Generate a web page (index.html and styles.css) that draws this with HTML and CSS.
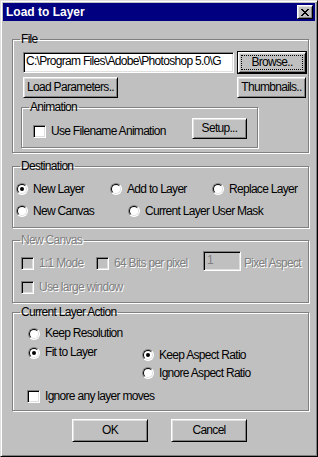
FILE: index.html
```html
<!DOCTYPE html>
<html>
<head>
<meta charset="utf-8">
<title>Load to Layer</title>
<link rel="stylesheet" href="styles.css">
</head>
<body>
<div class="window">
  <div class="titlebar">
    <span class="title">Load to Layer</span>
    <button class="close" aria-label="Close"><svg width="8" height="7" viewBox="0 0 8 7" shape-rendering="crispEdges"><path d="M0 0h2v1H0zM6 0h2v1H6zM1 1h2v1H1zM5 1h2v1H5zM2 2h4v1H2zM3 3h2v1H3zM2 4h4v1H2zM1 5h2v1H1zM5 5h2v1H5zM0 6h2v1H0zM6 6h2v1H6z"/></svg></button>
  </div>
  <div class="body">
    <fieldset class="grp grp-file">
      <legend>File</legend>
      <div class="file-inner">
        <div class="row r1">
          <div class="field path">C:\Program Files\Adobe\Photoshop 5.0\G</div>
          <button class="btn default browse">Browse..</button>
        </div>
        <div class="row r2">
          <button class="btn load">Load Parameters..</button>
          <button class="btn thumbs">Thumbnails..</button>
        </div>
        <fieldset class="grp grp-anim">
          <legend>Animation</legend>
          <div class="anim-inner">
            <label class="opt anim-chk"><span class="chk"></span>Use Filename Animation</label>
            <button class="btn setup">Setup...</button>
          </div>
        </fieldset>
      </div>
    </fieldset>

    <fieldset class="grp grp-dest">
      <legend>Destination</legend>
      <div class="dest-inner">
        <div class="row dest-row">
          <label class="opt w94"><span class="radio on"></span>New Layer</label>
          <label class="opt w102"><span class="radio"></span>Add to Layer</label>
          <label class="opt"><span class="radio"></span>Replace Layer</label>
        </div>
        <div class="row dest-row">
          <label class="opt w112"><span class="radio"></span>New Canvas</label>
          <label class="opt"><span class="radio"></span>Current Layer User Mask</label>
        </div>
      </div>
    </fieldset>

    <fieldset class="grp grp-canvas disabled">
      <legend>New Canvas</legend>
      <div class="canvas-inner">
        <div class="row canvas-row">
          <label class="opt w75"><span class="chk"></span>1:1 Mode</label>
          <label class="opt w107"><span class="chk"></span>64 Bits per pixel</label>
          <div class="field aspect">1</div>
          <span class="opt aspect-label">Pixel Aspect</span>
        </div>
        <label class="opt large"><span class="chk"></span>Use large window</label>
      </div>
    </fieldset>

    <fieldset class="grp grp-cla">
      <legend>Current Layer Action</legend>
      <div class="cla-inner">
        <div class="cla-radios">
          <div class="col-left">
            <label class="opt h19"><span class="radio"></span>Keep Resolution</label>
            <label class="opt h19"><span class="radio on"></span>Fit to Layer</label>
          </div>
          <div class="col-right">
            <label class="opt h18"><span class="radio on"></span>Keep Aspect Ratio</label>
            <label class="opt h18"><span class="radio"></span>Ignore Aspect Ratio</label>
          </div>
        </div>
        <label class="opt moves"><span class="chk"></span>Ignore any layer moves</label>
      </div>
    </fieldset>

    <div class="actions">
      <button class="btn act">OK</button>
      <button class="btn act">Cancel</button>
    </div>
  </div>
</div>
</body>
</html>
```

FILE: styles.css
```css
* { box-sizing: border-box; }
html, body { margin: 0; padding: 0; }
body {
  width: 318px;
  height: 457px;
  background: #c0c0c0;
  font-family: "Liberation Sans", Arial, sans-serif;
  font-size: 12px;
  letter-spacing: -0.7px;
  color: #000;
  overflow: hidden;
}
.window {
  width: 318px;
  height: 457px;
  background: #c0c0c0;
  border: 1px solid;
  border-color: #dfdfdf #000 #000 #dfdfdf;
  box-shadow: inset 1px 1px #fff, inset -1px -1px #808080;
  padding: 2px;
}
.titlebar {
  height: 18px;
  background: #000080;
  color: #fff;
  display: flex;
  align-items: center;
  justify-content: space-between;
  padding: 0 2px 0 3px;
}
.title {
  font-family: "Liberation Sans", Arial, sans-serif;
  font-weight: bold;
  font-size: 12px;
  letter-spacing: 0;
  line-height: 18px;
}
.close {
  width: 16px;
  height: 14px;
  padding: 0;
  margin: 0;
  background: #c0c0c0;
  border: 1px solid;
  border-color: #fff #000 #000 #fff;
  box-shadow: inset 1px 1px #dfdfdf, inset -1px -1px #808080;
  display: flex;
  align-items: center;
  justify-content: center;
}
.close svg { display: block; fill: #000; }

.body { padding: 0 6px 0 9px; }

.grp {
  margin: 0;
  padding: 0;
  border: 1px solid #808080;
  box-shadow: inset 1px 1px #fff, 1px 1px #fff;
  min-width: 0;
}
.grp > legend {
  margin-left: 7px;
  padding: 0 2px 0 1px;
  line-height: 15px;
  height: 15px;
}
.disabled, .disabled legend {
  color: #808080;
  text-shadow: 1px 1px #fff;
}

.row { display: flex; }
.opt {
  display: flex;
  align-items: center;
  white-space: nowrap;
  line-height: 15px;
  height: 15px;
}
.opt .radio { margin-right: 5px; }
.opt .chk { margin-right: 5px; }

/* controls */
.btn {
  font: inherit;
  letter-spacing: inherit;
  color: #000;
  height: 21px;
  padding: 0;
  margin: 0;
  background: #c0c0c0;
  border: 1px solid;
  border-color: #fff #000 #000 #fff;
  box-shadow: inset 1px 1px #dfdfdf, inset -1px -1px #808080;
  line-height: 15px;
  text-align: center;
  position: relative;
}
.btn.default { outline: 1px solid #000; }
.btn.browse::after {
  content: "";
  position: absolute;
  left: 2px; right: 2px; top: 2px; bottom: 2px;
  border: 1px dotted #000;
}
.field {
  background: #fff;
  border: 1px solid;
  border-color: #808080 #fff #fff #808080;
  box-shadow: inset 1px 1px #000, inset -1px -1px #dfdfdf;
  white-space: nowrap;
  overflow: hidden;
  line-height: 15px;
  padding: 1px 2px 0 2px;
}
.chk {
  width: 13px;
  height: 13px;
  flex: none;
  background: #fff;
  border: 1px solid;
  border-color: #808080 #fff #fff #808080;
  box-shadow: inset 1px 1px #000, inset -1px -1px #dfdfdf;
}
.disabled .chk { background: #c0c0c0; }
.radio {
  width: 12px;
  height: 12px;
  flex: none;
  border-radius: 50%;
  background: #fff;
  border: 1px solid;
  border-color: #808080 #fff #fff #808080;
  position: relative;
}
.radio::before {
  content: "";
  position: absolute;
  left: 0; top: 0; right: 0; bottom: 0;
  border-radius: 50%;
  border: 1px solid;
  border-color: #000 #dfdfdf #dfdfdf #000;
}
.radio.on::after {
  content: "";
  position: absolute;
  left: 3px; top: 3px;
  width: 4px; height: 4px;
  border-radius: 50%;
  background: #000;
}

/* File group */
.grp-file { margin-top: 11px; width: 297px; }
.file-inner { padding: 5px 2px 4px 10px; }
.r1 { justify-content: space-between; height: 21px; }
.path { width: 211px; height: 21px; }
.browse { width: 68px; }
.r2 { justify-content: space-between; margin-top: 4px; height: 21px; }
.load { width: 95px; }
.thumbs { width: 69px; }

.grp-anim { margin: 2px 0 0 -2px; width: 237px; }
.anim-inner { display: flex; align-items: flex-start; padding: 3px 0 8px 11px; }
.anim-chk { width: 159px; margin-top: 6px; }
.setup { width: 55px; }

/* Destination */
.grp-dest { margin-top: 6px; width: 297px; }
.dest-inner { padding: 4px 0 5px 3px; }
.dest-row { height: 22px; align-items: center; }
.w94 { width: 94px; }
.w102 { width: 102px; }
.w112 { width: 112px; }

/* New Canvas */
.grp-canvas { margin-top: 5px; width: 297px; }
.canvas-inner { padding: 3px 0 7px 8px; }
.canvas-row { height: 20px; align-items: flex-start; }
.canvas-row .opt { margin-top: 5px; }
.w75 { width: 75px; }
.w107 { width: 107px; }
.aspect { width: 38px; height: 20px; background: #c0c0c0; color: #808080; text-shadow: none; padding-left: 3px; }
.aspect-label { margin-left: 3px; }
.large { margin-top: 9px; }

/* Current Layer Action */
.grp-cla { margin-top: 2px; width: 297px; }
.cla-inner { padding: 4px 0 6px 15px; }
.cla-radios { display: flex; }
.col-left { width: 114px; }
.col-right { margin-top: 22px; }
.h19 { height: 19px; }
.h18 { height: 18px; }
.moves { margin: 7px 0 0 -1px; }

/* buttons */
.actions {
  display: flex;
  justify-content: center;
  gap: 23px;
  margin-top: 8px;
  padding-right: 2px;
}
.act { width: 76px; height: 23px; }
```
